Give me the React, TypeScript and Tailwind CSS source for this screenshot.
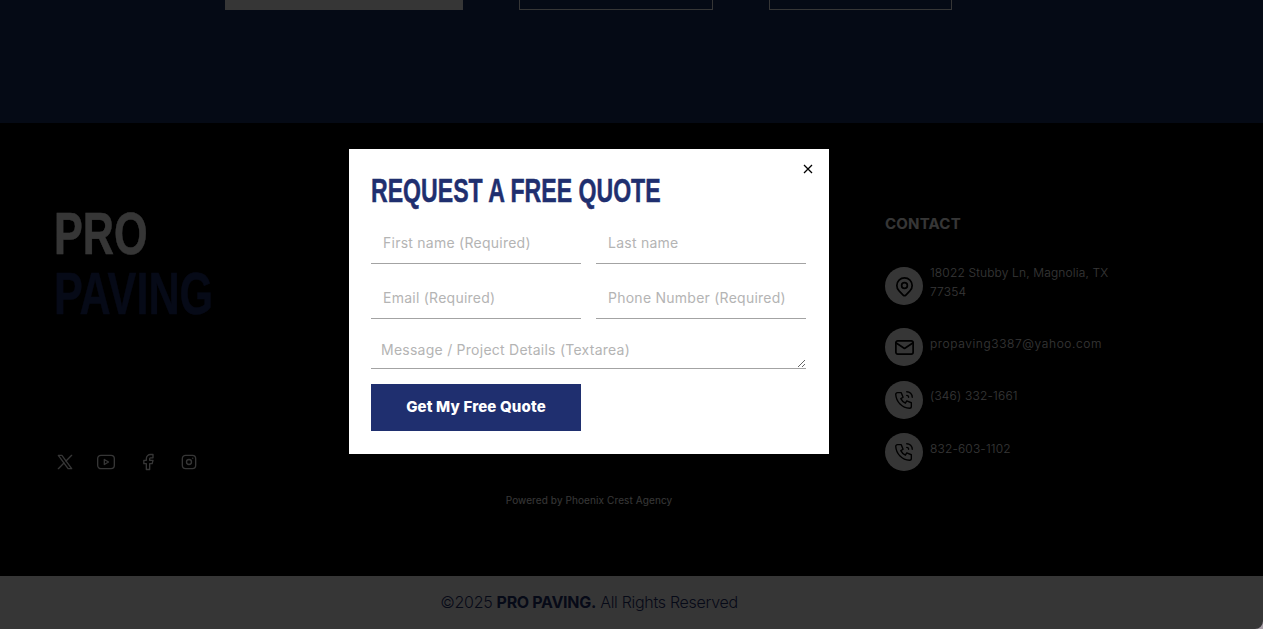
import { TbBrandX, TbBrandYoutube, TbBrandFacebook, TbBrandInstagram, TbMapPin, TbMail, TbPhoneCall } from "react-icons/tb";

const body = "font-['Inter','Noto_Sans',sans-serif]";
const head = "font-['Liberation_Sans',sans-serif] font-bold [-webkit-text-stroke:0.5px_currentColor]";
const fieldCls = `w-full bg-transparent outline-none border-b border-[#a3a3a3] text-[14px] tracking-[0.25px] placeholder:text-[#b4b4b4] ${body}`;

function Contact({ icon, children, h, track }: { icon: React.ReactNode; children: React.ReactNode; h: string; track: string }) {
  return (
    <div className={`flex gap-[7px] ${h}`}>
      <div className="w-[38px] h-[38px] rounded-full bg-white text-black flex items-center justify-center shrink-0">{icon}</div>
      <div className={`text-[12px] leading-[19px] ${track} text-white w-[190px] font-light`}>{children}</div>
    </div>
  );
}

export default function App() {
  return (
    <div className={`relative h-[629px] w-full overflow-hidden bg-white ${body}`}>
      <section className="h-[123px] bg-[#1a3264] flex items-start">
        <div className="ml-[225px] w-[238px] h-[10px] bg-white" />
        <div className="ml-[56px] w-[194px] h-[10px] border-b border-x border-white" />
        <div className="ml-[56px] w-[183px] h-[10px] border-b border-x border-white" />
      </section>

      <footer className="h-[453px] bg-black">
        <div className="flex h-[370px]">
          <div className="w-[885px] shrink-0 pl-[54px]">
            <div className={`${head} pt-[81px] text-[60px] leading-[60px] origin-left scale-x-[.72] text-white`}>
              PRO
              <div className="text-[#1f2f6f]">PAVING</div>
            </div>
            <div className="mt-[128px] flex items-center gap-[21.4px] text-white pl-[1px]">
              <TbBrandX size={20} strokeWidth={1.6} />
              <TbBrandYoutube size={20} strokeWidth={1.6} />
              <TbBrandFacebook size={20} strokeWidth={1.6} />
              <TbBrandInstagram size={20} strokeWidth={1.6} />
            </div>
          </div>
          <div className="pt-[91px]">
            <div className="text-[15px] leading-[20px] font-bold text-white tracking-[0.2px] mb-[33px]">CONTACT</div>
            <Contact h="h-[61px]" track="tracking-[0.15px]" icon={<TbMapPin size={23} strokeWidth={1.8} />}>
              <span className="block -mt-[4px]">18022 Stubby Ln, Magnolia, TX 77354</span>
            </Contact>
            <Contact h="h-[53px]" track="tracking-[0.6px]" icon={<TbMail size={23} strokeWidth={1.8} />}>
              <span className="block pt-[6px]">propaving3387@yahoo.com</span>
            </Contact>
            <Contact h="h-[52px]" track="tracking-[0.2px]" icon={<TbPhoneCall size={22} strokeWidth={1.5} />}>
              <span className="block pt-[5px]">(346) 332-1661</span>
            </Contact>
            <Contact h="h-[38px]" track="tracking-[0.15px]" icon={<TbPhoneCall size={22} strokeWidth={1.5} />}>
              <span className="block pt-[6px]">832-603-1102</span>
            </Contact>
          </div>
        </div>
        <div className="pr-[85px] text-center text-[10px] leading-[14px] tracking-[0.1px] text-white">Powered by Phoenix Crest Agency</div>
      </footer>

      <div className="h-[53px] bg-white flex items-center justify-center pr-[85px] pb-[2px] text-[16px] text-[#1f2f6f] tracking-[-0.3px] font-light">
        <span>©2025 <b className="font-bold">PRO PAVING.</b> All Rights Reserved</span>
      </div>

      <div className="absolute inset-0 bg-black/[.79] flex justify-center items-start pt-[149px] pr-[85px]">
        <div className="relative w-[480px] h-[305px] bg-white px-[22px] pt-[23px]">
          <button className="absolute top-[13px] right-[14px] w-[14px] h-[14px] text-black flex items-center justify-center">
            <svg width="10" height="10" viewBox="0 0 10 10" fill="none" stroke="currentColor" strokeWidth="1.3"><path d="M1 1l8 8M9 1l-8 8" /></svg>
          </button>
          <h2 className={`${head} text-[33px] leading-[38px] text-[#1f2f6f] origin-left scale-x-[.70] whitespace-nowrap`}>REQUEST A FREE QUOTE</h2>
          <form className="mt-[9px] grid grid-cols-2 gap-x-[15px] gap-y-0 w-[435px]">
            <input className={`${fieldCls} h-[45px] pl-[12px] pt-[3px]`} placeholder="First name (Required)" />
            <input className={`${fieldCls} h-[45px] pl-[12px] pt-[3px]`} placeholder="Last name" />
            <input className={`${fieldCls} h-[45px] pl-[12px] pt-[3px] mt-[10px]`} placeholder="Email (Required)" />
            <input className={`${fieldCls} h-[45px] pl-[12px] pt-[3px] mt-[10px]`} placeholder="Phone Number (Required)" />
            <textarea className={`${fieldCls} col-span-2 h-[40px] mt-[10px] pl-[10px] pt-[10px] leading-[21px] tracking-[0.05px] block`} placeholder="Message / Project Details (Textarea)" />
            <button type="button" className="mt-[15px] h-[47px] bg-[#1f2f6f] text-white text-[15px] font-extrabold tracking-[0.15px]">Get My Free Quote</button>
          </form>
        </div>
      </div>

      <div className="absolute right-0 bottom-0 w-[8px] h-[8px]">
        <svg width="8" height="8" viewBox="0 0 8 8"><path d="M8 0V8H0A8 8 0 0 0 8 0Z" fill="#a89fa8" /></svg>
      </div>
    </div>
  );
}
